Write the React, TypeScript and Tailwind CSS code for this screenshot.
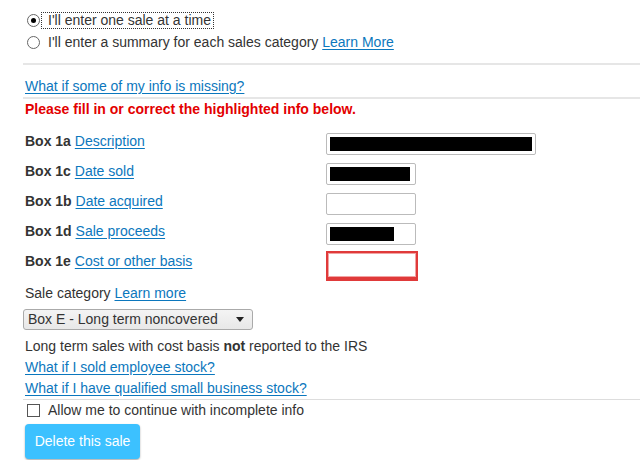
import React from 'react'

const link = 'text-[#0b77bd] underline underline-offset-2'

interface BoxRow {
  box: string
  label: string
  width: number
  fill: number
  missing?: boolean
}

const rows: BoxRow[] = [
  { box: 'Box 1a', label: 'Description', width: 210, fill: 203 },
  { box: 'Box 1c', label: 'Date sold', width: 90, fill: 80 },
  { box: 'Box 1b', label: 'Date acquired', width: 90, fill: 0 },
  { box: 'Box 1d', label: 'Sale proceeds', width: 90, fill: 64 },
  { box: 'Box 1e', label: 'Cost or other basis', width: 92, fill: 0, missing: true }
]

function Radio({ checked }: { checked?: boolean }) {
  return (
    <span className="w-[13px] h-[13px] rounded-full border border-[#666] bg-white flex items-center justify-center shrink-0">
      {checked && <span className="w-[5px] h-[5px] rounded-full bg-black" />}
    </span>
  )
}

export default function App() {
  return (
    <div className="w-[640px] h-[460px] overflow-hidden bg-white font-['Liberation_Sans',Arial,sans-serif] text-[14px] text-[#333]">
      <div className="pl-[27px] pt-[12px]">
        <div className="flex items-center h-[17px]">
          <Radio checked />
          <span className="ml-[1px] pl-[6px] pr-[2px] border border-dotted border-[#333] leading-[15px]">I'll enter one sale at a time</span>
        </div>
        <div className="flex items-center h-[22px] mt-[2px]">
          <Radio />
          <span className="ml-[8px]">I'll enter a summary for each sales category <span className={link}>Learn More</span></span>
        </div>
      </div>

      <div className="ml-[23px] mt-[10px] h-[2px] bg-[#e6e6e6]" />

      <div className="pl-[25px] pt-[12px] leading-[18px]">
        <span className={link}>What if some of my info is missing?</span>
      </div>

      <div className="ml-[23px] mt-[2px] h-[2px] bg-[#e6e6e6]" />

      <div className="pl-[25px] pt-[1px] leading-[18px] font-bold text-[#e30000]">
        Please fill in or correct the highlighted info below.
      </div>

      <div className="pl-[25px] pt-[13px]">
        {rows.map((r) => (
          <div key={r.box} className="flex items-start h-[30px]">
            <div className="w-[301px] leading-[20px]">
              <span className="font-bold">{r.box}</span> <span className={link}>{r.label}</span>
            </div>
            {r.missing ? (
              <div className="w-[92px] h-[30px] border-2 border-b-4 border-[#e03a3a] bg-white">
                <div className="w-full h-full border border-[#f2a3a3]" />
              </div>
            ) : (
              <div
                className="mt-[2px] h-[22px] border border-[#bbb] rounded-[2px] bg-white flex items-center px-[3px]"
                style={{ width: r.width }}
              >
                {r.fill > 0 && <div className="h-[14px] bg-black" style={{ width: r.fill }} />}
              </div>
            )}
          </div>
        ))}
      </div>

      <div className="pl-[25px] pt-[2px] leading-[20px]">
        Sale category <span className={link}>Learn more</span>
      </div>

      <div className="pl-[23px] pt-[6px]">
        <div className="w-[230px] h-[21px] border border-[#aaa] rounded-[3px] bg-gradient-to-b from-[#f4f4f4] to-[#e8e8e8] flex items-center justify-between pl-[4px] pr-[8px]">
          <span className="leading-[19px]">Box E - Long term noncovered</span>
          <svg width="8" height="5" viewBox="0 0 8 5"><path d="M0 0h8L4 5z" fill="#222" /></svg>
        </div>
      </div>

      <div className="pl-[25px] pt-[6px] leading-[21px]">
        <div>Long term sales with cost basis <span className="font-bold">not</span> reported to the IRS</div>
        <div><span className={link}>What if I sold employee stock?</span></div>
        <div><span className={link}>What if I have qualified small business stock?</span></div>
      </div>

      <div className="ml-[23px] h-[1px] bg-[#ddd]" />

      <div className="pl-[27px] pt-[1px] flex items-center h-[20px]">
        <span className="w-[13px] h-[13px] border border-[#555] bg-white shrink-0" />
        <span className="ml-[8px]">Allow me to continue with incomplete info</span>
      </div>

      <div className="pl-[25px] pt-[4px]">
        <button className="w-[115px] h-[35px] rounded-[4px] bg-[#3cc1ff] text-white shadow-[0_1px_2px_rgba(0,0,0,0.35)]">
          Delete this sale
        </button>
      </div>
    </div>
  )
}
